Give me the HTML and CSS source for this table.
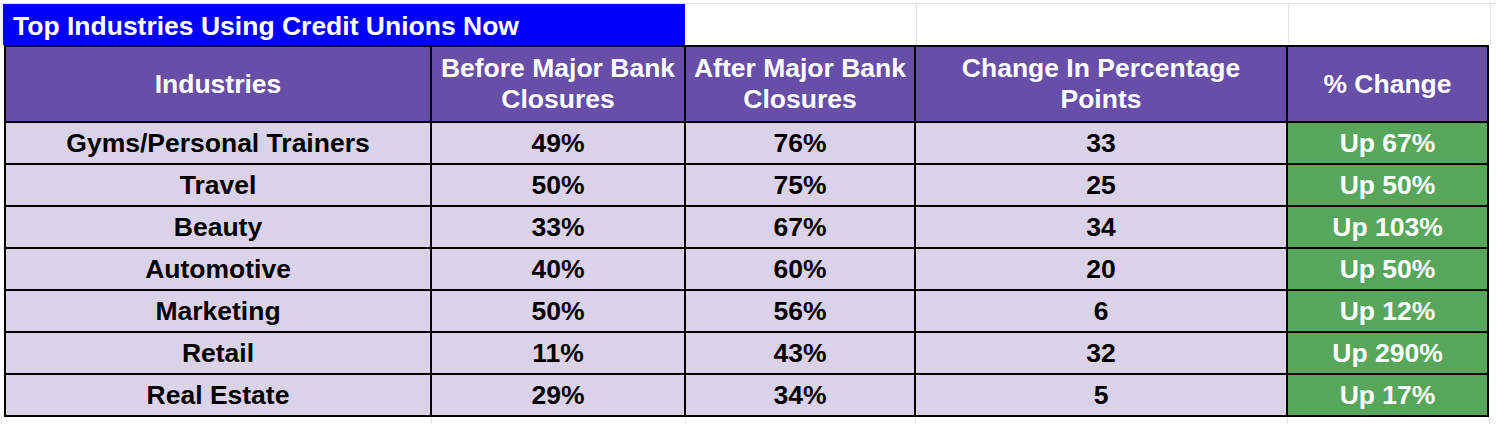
FILE: index.html
```html
<!DOCTYPE html>
<html lang="en">
<head>
<meta charset="utf-8">
<title>Top Industries Using Credit Unions Now</title>
<link rel="stylesheet" href="styles.css">
</head>
<body>
<div class="sheet">
  <div class="title-row">
    <div class="title">Top Industries Using Credit Unions Now</div>
    <div class="gcell w-c"></div>
    <div class="gcell w-d"></div>
    <div class="gcell w-e"></div>
  </div>
  <table class="data">
    <colgroup>
      <col class="col-a"><col class="col-b"><col class="col-c"><col class="col-d"><col class="col-e">
    </colgroup>
    <thead>
      <tr class="head">
        <th>Industries</th>
        <th>Before Major Bank Closures</th>
        <th>After Major Bank Closures</th>
        <th>Change In Percentage Points</th>
        <th>% Change</th>
      </tr>
    </thead>
    <tbody>
      <tr><td>Gyms/Personal Trainers</td><td>49%</td><td>76%</td><td>33</td><td class="up">Up 67%</td></tr>
      <tr><td>Travel</td><td>50%</td><td>75%</td><td>25</td><td class="up">Up 50%</td></tr>
      <tr><td>Beauty</td><td>33%</td><td>67%</td><td>34</td><td class="up">Up 103%</td></tr>
      <tr><td>Automotive</td><td>40%</td><td>60%</td><td>20</td><td class="up">Up 50%</td></tr>
      <tr><td>Marketing</td><td>50%</td><td>56%</td><td>6</td><td class="up">Up 12%</td></tr>
      <tr><td>Retail</td><td>11%</td><td>43%</td><td>32</td><td class="up">Up 290%</td></tr>
      <tr><td>Real Estate</td><td>29%</td><td>34%</td><td>5</td><td class="up">Up 17%</td></tr>
    </tbody>
  </table>
  <div class="bottom-row">
    <div class="gcell b-a"></div>
    <div class="gcell b-b"></div>
    <div class="gcell b-c"></div>
    <div class="gcell b-d"></div>
    <div class="gcell b-e"></div>
  </div>
</div>
</body>
</html>
```
FILE: styles.css
```css
html, body {
  margin: 0;
  padding: 0;
  background: #ffffff;
}
body {
  font-family: "Liberation Sans", Arial, sans-serif;
  width: 1496px;
  height: 424px;
  overflow: hidden;
}
.sheet {
  padding-top: 3px;
}
.title-row {
  display: flex;
  height: 41px;
  border-top: 1px solid #e2e2e2;
  border-left: 1px solid #e2e2e2;
  margin-left: 1px;
}
.title {
  width: 682px;
  height: 41px;
  margin-left: 1px;
  background: #0000ff;
  color: #ffffff;
  font-weight: bold;
  font-size: 26.5px;
  line-height: 37px;
  padding: 4px 0 0 10px;
  box-sizing: border-box;
  white-space: nowrap;
  overflow: hidden;
}
.gcell {
  box-sizing: border-box;
  border-right: 1px solid #e2e2e2;
}
.w-c { width: 232px; }
.w-d { width: 372px; }
.w-e { width: 202px; }

table.data {
  border-collapse: collapse;
  table-layout: fixed;
  width: 1485px;
  margin-left: 4px;
}
.col-a { width: 426px; }
.col-b { width: 254px; }
.col-c { width: 230px; }
.col-d { width: 372px; }
.col-e { width: 201px; }

table.data th,
table.data td {
  border: 2px solid #000000;
  padding: 0 2px;
  text-align: center;
  font-weight: bold;
  overflow: hidden;
  white-space: nowrap;
  font-size: 26.5px;
}
table.data th {
  background: #674ea7;
  color: #ffffff;
  line-height: 31px;
  padding: 0 6px;
  white-space: normal;
}
tr.head { height: 76px; }
table.data tbody tr { height: 42px; }
table.data td {
  background: #d9d2e9;
  color: #000000;
  line-height: 30px;
}
table.data td.up {
  background: #58a65c;
  color: #ffffff;
}

.bottom-row {
  display: flex;
  height: 10px;
  margin-left: 1px;
  border-left: 1px solid #e2e2e2;
}
.b-a { width: 430px; }
.b-b { width: 254px; }
.b-c { width: 230px; }
.b-d { width: 372px; }
.b-e { width: 202px; }
```
